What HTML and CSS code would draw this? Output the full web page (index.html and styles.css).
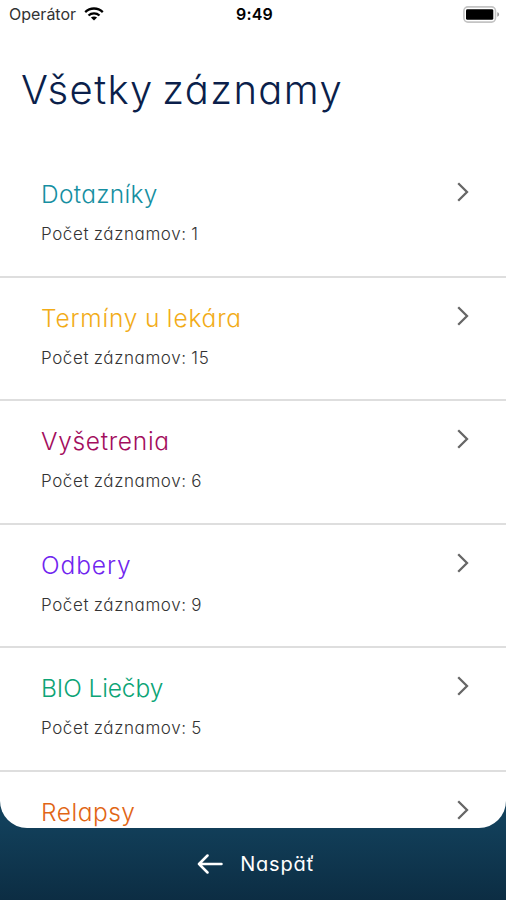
FILE: index.html
```html
<!DOCTYPE html>
<html lang="sk">
<head>
  <meta charset="UTF-8">
  <meta name="viewport" content="width=device-width, initial-scale=1.0">
  <title>Všetky záznamy</title>
  <link rel="stylesheet" href="styles.css">
</head>
<body>
  <main class="sheet">
    <div class="status-bar">
      <div class="carrier">
        <span class="carrier-name">Operátor</span>
        <svg class="wifi" width="20" height="14" viewBox="0 0 20 14" fill="none" stroke="#000" stroke-width="2.3">
          <path d="M1.2 5.1C6.2.3 13.8.3 18.8 5.1"/>
          <path d="M4.5 8.5c3.1-2.9 7.9-2.9 11 0"/>
          <path d="M10 13.6 6.9 10.6c1.8-1.6 4.4-1.6 6.2 0z" fill="#000" stroke="none"/>
        </svg>
      </div>
      <span class="time">9:49</span>
      <svg class="battery" width="37" height="17" viewBox="0 0 37 17">
        <rect x=".9" y=".9" width="31.6" height="15.2" rx="4" fill="#fff" stroke="#c4c4c4" stroke-width="1.6"/>
        <rect x="3" y="3.2" width="27.3" height="10.6" rx="1.4" fill="#000"/>
        <path d="M34.3 6.3c2.4.5 2.4 3.9 0 4.4z" fill="#999"/>
      </svg>
    </div>

    <h1>Všetky záznamy</h1>

    <div class="records">
      <div class="record">
        <div>
          <h2 class="questionnaires">Dotazníky</h2>
          <p>Počet záznamov: 1</p>
        </div>
        <svg class="chevron" width="12" height="20" viewBox="0 0 12 20"><path d="M1.2 1.2 10 10l-8.8 8.8"/></svg>
      </div>
      <div class="record">
        <div>
          <h2 class="appointments">Termíny u lekára</h2>
          <p>Počet záznamov: 15</p>
        </div>
        <svg class="chevron" width="12" height="20" viewBox="0 0 12 20"><path d="M1.2 1.2 10 10l-8.8 8.8"/></svg>
      </div>
      <div class="record">
        <div>
          <h2 class="examinations">Vyšetrenia</h2>
          <p>Počet záznamov: 6</p>
        </div>
        <svg class="chevron" width="12" height="20" viewBox="0 0 12 20"><path d="M1.2 1.2 10 10l-8.8 8.8"/></svg>
      </div>
      <div class="record">
        <div>
          <h2 class="samples">Odbery</h2>
          <p>Počet záznamov: 9</p>
        </div>
        <svg class="chevron" width="12" height="20" viewBox="0 0 12 20"><path d="M1.2 1.2 10 10l-8.8 8.8"/></svg>
      </div>
      <div class="record">
        <div>
          <h2 class="therapy">BIO Liečby</h2>
          <p>Počet záznamov: 5</p>
        </div>
        <svg class="chevron" width="12" height="20" viewBox="0 0 12 20"><path d="M1.2 1.2 10 10l-8.8 8.8"/></svg>
      </div>
      <div class="record">
        <div>
          <h2 class="relapses">Relapsy</h2>
        </div>
        <svg class="chevron" width="12" height="20" viewBox="0 0 12 20"><path d="M1.2 1.2 10 10l-8.8 8.8"/></svg>
      </div>
    </div>
  </main>

  <button class="back-btn">
    <svg width="26" height="20" viewBox="0 0 26 20"><path d="M24.5 10H2M10.5 1.5 2 10l8.5 8.5"/></svg>
    <span>Naspäť</span>
  </button>
</body>
</html>
```
FILE: styles.css
```css
body {
  margin: 0;
  font-family: Inter, "Liberation Sans", sans-serif;
  font-feature-settings: "cv11";
  background: linear-gradient(#12405b 820px, #0c2d43 900px);
  height: 900px;
  overflow: hidden;
  white-space: nowrap;
}

.sheet {
  height: 828px;
  box-sizing: border-box;
  overflow: hidden;
  background-color: #fff;
  border-radius: 0 0 27px 27px;
}

.status-bar {
  display: grid;
  grid-template-columns: 1fr auto 1fr;
  align-items: center;
  height: 28px;
  padding: 0 6px 0 9px;
}

.carrier {
  display: flex;
  align-items: center;
  gap: 8px;
}

.carrier-name {
  font-size: 16px;
  color: #333;
  font-feature-settings: normal;
}

.time {
  font-size: 16px;
  font-weight: 600;
  letter-spacing: 0.2px;
}

.battery {
  justify-self: end;
}

h1 {
  margin: 0;
  padding: 33px 0 0 21px;
  height: 126px;
  box-sizing: border-box;
  font-size: 40px;
  line-height: 58px;
  font-weight: 300;
  letter-spacing: 1.4px;
  word-spacing: -4px;
  color: #0b1f4b;
}

.record {
  display: flex;
  justify-content: space-between;
  height: 123.6px;
  box-sizing: border-box;
  padding: 24px 37px 0 41px;
  border-bottom: 2px solid #dedede;
}

h2 {
  margin: 0;
  font-size: 24.5px;
  line-height: 32px;
  font-weight: 300;
  letter-spacing: 0.7px;
}

p {
  margin: 12px 0 0;
  font-size: 17px;
  line-height: 24px;
  font-weight: 300;
  letter-spacing: 0.6px;
  word-spacing: -0.7px;
  color: #333;
}

.questionnaires {
  color: #168fa2;
  letter-spacing: 0.3px;
}

.appointments {
  color: #f2ac18;
  letter-spacing: 0.8px;
  word-spacing: -1px;
}

.examinations {
  color: #a30d5d;
}

.samples {
  color: #7025ef;
  letter-spacing: 0.9px;
}

.therapy {
  color: #0ca476;
  letter-spacing: -0.1px;
}

.relapses {
  color: #e16514;
  letter-spacing: 0.5px;
}

.chevron {
  margin-top: 4px;
  fill: none;
  stroke: #666;
  stroke-width: 2.3;
}

.back-btn {
  display: flex;
  align-items: center;
  justify-content: center;
  gap: 17px;
  width: 100%;
  height: 72px;
  padding: 0 0 0 6px;
  border: none;
  background: none;
  color: #fff;
  font: inherit;
  font-size: 20px;
  letter-spacing: 0.8px;
  font-feature-settings: inherit;
  cursor: pointer;
}

.back-btn svg {
  fill: none;
  stroke: #fff;
  stroke-width: 2.5;
  stroke-linecap: round;
  stroke-linejoin: round;
}
```
